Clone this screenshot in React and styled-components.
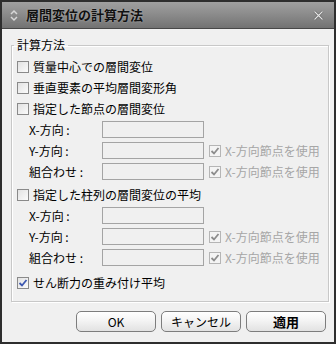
import React from "react";
import styled, { createGlobalStyle } from "styled-components";

const Global = createGlobalStyle`
  html, body { margin: 0; padding: 0; background: #f0f0f0; }
  * { box-sizing: border-box; }
`;

const FONT = `"Noto Sans CJK JP", "Liberation Sans", sans-serif`;

const Window = styled.div`
  width: 336px;
  height: 344px;
  border: 2px solid #2e2e2e;
  background: #f0f0f0;
  display: flex;
  flex-direction: column;
  font-family: ${FONT};
  font-size: 12px;
  color: #000;
`;

const TitleBar = styled.div`
  height: 27px;
  flex: none;
  display: flex;
  align-items: center;
  padding: 0 10px 0 7px;
  gap: 7px;
  background: linear-gradient(#a0a0a0 0%, #8a8a8a 50%, #727272 100%);
  border-bottom: 1px solid #474747;
`;

const Title = styled.div`
  flex: 1;
  font-size: 13px;
  font-weight: 700;
  color: #111;
  line-height: 16px;
  text-shadow: 0 0 2px rgba(255,255,255,0.4);
`;

const Body = styled.div`
  flex: 1;
  display: flex;
  flex-direction: column;
  padding: 9px 8px 0 9px;
`;

const Group = styled.fieldset`
  margin: 0;
  padding: 4px 8px 8px 5px;
  border: 1px solid #c8c8c8;
  box-shadow: inset 1px 1px 0 #fff, 1px 1px 0 #fff;
  display: flex;
  flex-direction: column;
`;

const Legend = styled.legend`
  padding: 0 3px;
  margin-left: -3px;
  font-size: 12px;
  line-height: 14px;
`;

const Row = styled.div`
  display: flex;
  align-items: center;
  height: 21px;
  margin-top: ${(p) => p.$mt || 0}px;
  padding-left: ${(p) => (p.$sub ? 12 : 0)}px;
  gap: ${(p) => (p.$sub ? 0 : 4)}px;
  white-space: nowrap;
  line-height: 14px;
`;

const Box = styled.span`
  width: 12px;
  height: 12px;
  flex: none;
  border: 1px solid ${(p) => (p.$disabled ? "#b5b5b5" : "#8a8a8a")};
  background: ${(p) =>
    p.$disabled ? "#f4f4f4" : "linear-gradient(135deg, #e2e2e2, #fbfbfb)"};
  display: flex;
  align-items: center;
  justify-content: center;
`;

const Label = styled.span`
  width: 73px;
  flex: none;
`;

const Input = styled.span`
  width: 102px;
  height: 17px;
  flex: none;
  border: 1px solid #a4a4a4;
  background: #f0f0f0;
  margin-right: 5px;
`;

const DisabledText = styled.span`
  color: #a6a6a6;
  margin-left: 4px;
`;

const Buttons = styled.div`
  display: flex;
  justify-content: flex-end;
  gap: 5px;
  margin-top: 9px;
`;

const Button = styled.button`
  width: 80px;
  height: 21px;
  padding: 0;
  border: 1px solid #7d7d7d;
  border-radius: 5px;
  background: linear-gradient(#ffffff 0%, #f4f4f4 45%, #e2e2e2 100%);
  font-family: ${FONT};
  font-size: ${(p) => (p.$bold ? 13 : 12)}px;
  font-weight: ${(p) => (p.$bold ? 700 : 400)};
  color: #000;
  line-height: 14px;
`;

const Check = ({ color }) => (
  <svg width="10" height="10" viewBox="0 0 10 10">
    <path d="M1.5 5 L4 7.5 L8.5 2" fill="none" stroke={color} strokeWidth="1.8" />
  </svg>
);

const CheckBox = ({ checked, disabled }) => (
  <Box $disabled={disabled}>
    {checked && <Check color={disabled ? "#8c8c8c" : "#3d58b0"} />}
  </Box>
);

const SubRows = () => (
  <>
    <Row $sub>
      <Label>X-方向 :</Label>
      <Input />
    </Row>
    <Row $sub>
      <Label>Y-方向 :</Label>
      <Input />
      <CheckBox checked disabled />
      <DisabledText>X-方向節点を使用</DisabledText>
    </Row>
    <Row $sub>
      <Label>組合わせ :</Label>
      <Input />
      <CheckBox checked disabled />
      <DisabledText>X-方向節点を使用</DisabledText>
    </Row>
  </>
);

export default function App() {
  return (
    <Window>
      <Global />
      <TitleBar>
        <svg width="10" height="13" viewBox="0 0 10 13">
          <path d="M2 5 L5 2 L8 5" fill="none" stroke="#d8d8d8" strokeWidth="1.5" />
          <path d="M2 8 L5 11 L8 8" fill="none" stroke="#d8d8d8" strokeWidth="1.5" />
        </svg>
        <Title>層間変位の計算方法</Title>
        <svg width="11" height="11" viewBox="0 0 11 11">
          <path d="M1.5 1.5 L9.5 9.5 M9.5 1.5 L1.5 9.5" stroke="#555" strokeWidth="2.4" />
          <path d="M1.5 1.5 L9.5 9.5 M9.5 1.5 L1.5 9.5" stroke="#e4e4e4" strokeWidth="1.2" />
        </svg>
      </TitleBar>
      <Body>
        <Group>
          <Legend>計算方法</Legend>
          <Row>
            <CheckBox />
            <span>質量中心での層間変位</span>
          </Row>
          <Row>
            <CheckBox />
            <span>垂直要素の平均層間変形角</span>
          </Row>
          <Row>
            <CheckBox />
            <span>指定した節点の層間変位</span>
          </Row>
          <SubRows />
          <Row $mt={2}>
            <CheckBox />
            <span>指定した柱列の層間変位の平均</span>
          </Row>
          <SubRows />
          <Row $mt={4}>
            <CheckBox checked />
            <span>せん断力の重み付け平均</span>
          </Row>
        </Group>
        <Buttons>
          <Button>OK</Button>
          <Button>キャンセル</Button>
          <Button $bold>適用</Button>
        </Buttons>
      </Body>
    </Window>
  );
}
